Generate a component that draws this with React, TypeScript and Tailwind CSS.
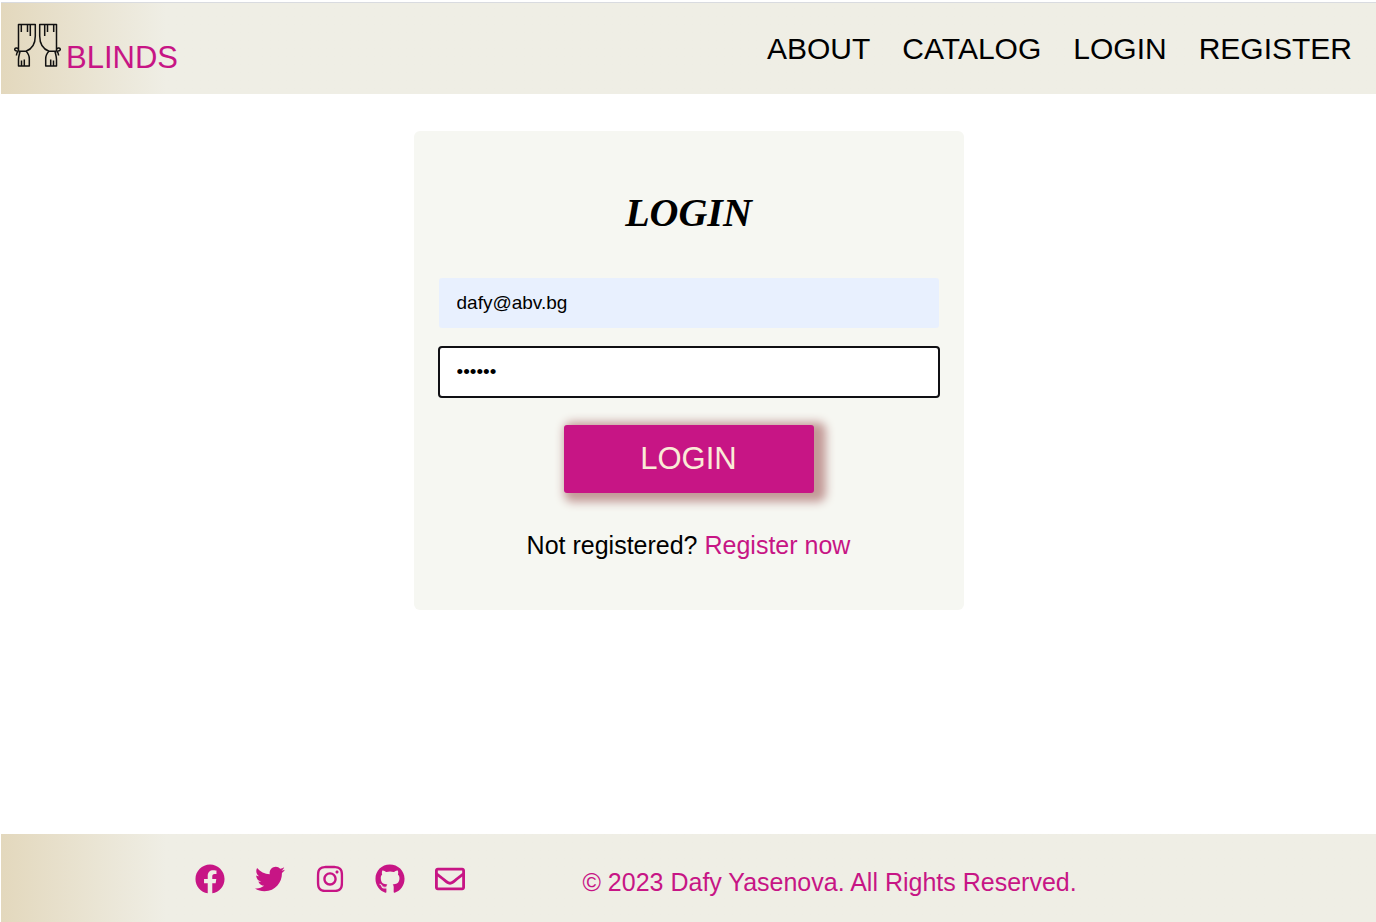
import React from "react";
import { FaFacebook, FaTwitter, FaInstagram, FaGithub, FaRegEnvelope } from "react-icons/fa";

const navItems = ["ABOUT", "CATALOG", "LOGIN", "REGISTER"];

const socials = [
  { label: "Facebook", Icon: FaFacebook },
  { label: "Twitter", Icon: FaTwitter },
  { label: "Instagram", Icon: FaInstagram },
  { label: "GitHub", Icon: FaGithub },
  { label: "Email", Icon: FaRegEnvelope },
];

function CurtainHalf() {
  return (
    <>
      <path d="M4.500 28V1.500H21.300V13C21.300 20 18 26 12 28.300H4.500" />
      <path d="M7.300 1.500V9M13.500 1.500V9M16.300 1.500V13" />
      <path d="M4.500 28.300C3 28 .7 28.200 .7 26.500C.7 24.800 3.200 24.500 4.200 26M4.500 28.300C3 29.300 2.300 30.500 2.500 32.500" />
      <path d="M12 28.300C14.500 30.500 15.300 33 15.300 36V43H4.500V36.500C4.500 33.500 5.500 31 6 28.500" />
      <path d="M7.500 43V37.500M10.300 43V36.500" />
    </>
  );
}

function CurtainsLogo() {
  return (
    <svg
      viewBox="0 0 47 44"
      className="h-11 w-[47px]"
      fill="none"
      stroke="#111"
      strokeWidth="1.5"
      strokeLinejoin="round"
      aria-hidden="true"
    >
      <CurtainHalf />
      <g transform="translate(47 0) scale(-1 1)">
        <CurtainHalf />
      </g>
    </svg>
  );
}

function Header() {
  return (
    <header className="flex h-[92px] items-center justify-between border-t border-[#d9dbe0] bg-[#efeee5] bg-linear-to-r from-[#e3d8bd] to-[#efeee5] to-12% pr-6 pl-[13px]">
      <a href="#home" className="flex items-end gap-[5px] text-[31px] leading-[34px] text-[#c71585]">
        <span className="pb-2">
          <CurtainsLogo />
        </span>
        <span>BLINDS</span>
      </a>
      <nav>
        <ul className="flex gap-8 text-[30px] leading-9 text-black">
          {navItems.map((item) => (
            <li key={item}>
              <a href={`#${item.toLowerCase()}`}>{item}</a>
            </li>
          ))}
        </ul>
      </nav>
    </header>
  );
}

function LoginForm() {
  return (
    <form
      className="mx-auto flex w-full max-w-[550px] flex-col items-center rounded-md bg-[#f6f7f2] px-[25px] pt-[57px] pb-[49px]"
      onSubmit={(e) => e.preventDefault()}
    >
      <h1 className="font-['Liberation_Serif',serif] text-[40px] leading-[50px] font-bold text-black italic">
        LOGIN
      </h1>
      <input
        type="email"
        aria-label="Email"
        defaultValue="dafy@abv.bg"
        className="mt-10 h-[50px] w-full rounded-[3px] bg-[#e8f0fe] px-[18px] text-[19px] text-black outline-none"
      />
      <input
        type="password"
        aria-label="Password"
        defaultValue="123456"
        className="mt-[19px] h-[50px] w-full rounded-[3px] bg-white px-[18px] text-[19px] text-black outline-2 -outline-offset-1 outline-[#101014]"
      />
      <button
        type="submit"
        className="mt-7 h-[68px] w-[250px] rounded-[3px] bg-[#c71585] text-[31px] text-[#faebd7] shadow-[6px_3px_10px_6px_#c39a97]"
      >
        LOGIN
      </button>
      <p className="mt-9 text-[25px] leading-8 text-black">
        Not registered?{" "}
        <a href="#register" className="text-[#c71585]">
          Register now
        </a>
      </p>
    </form>
  );
}

function Footer() {
  return (
    <footer className="flex h-[88px] items-center bg-[#efeee5] bg-linear-to-r from-[#e3d8bd] to-[#efeee5] to-12% pl-[14%] text-[#c71585]">
      <ul className="flex items-center gap-[30px] pt-0.5 pl-px">
        {socials.map(({ label, Icon }) => (
          <li key={label}>
            <a
              href={`#${label.toLowerCase()}`}
              aria-label={label}
              className="flex w-[30px] justify-center"
            >
              <Icon className="h-[30px] w-auto" />
            </a>
          </li>
        ))}
      </ul>
      <p className="ml-[118px] pt-2 text-[25px] leading-8">
        © 2023 Dafy Yasenova. All Rights Reserved.
      </p>
    </footer>
  );
}

export default function App() {
  return (
    <div className="flex min-h-screen flex-col bg-white pt-0.5 pl-px font-['Liberation_Sans',Arial,sans-serif]">
      <Header />
      <main className="flex-1 py-[37px]">
        <LoginForm />
      </main>
      <Footer />
    </div>
  );
}
